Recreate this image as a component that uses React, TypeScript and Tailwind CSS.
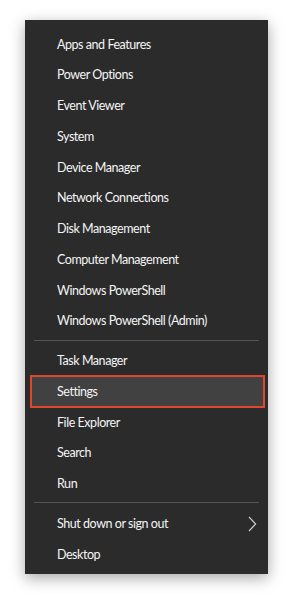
import React from "react";

const groups: string[][] = [
  [
    "Apps and Features",
    "Power Options",
    "Event Viewer",
    "System",
    "Device Manager",
    "Network Connections",
    "Disk Management",
    "Computer Management",
    "Windows PowerShell",
    "Windows PowerShell (Admin)",
  ],
  ["Task Manager", "Settings", "File Explorer", "Search", "Run"],
  ["Shut down or sign out", "Desktop"],
];

const Row: React.FC<{ label: string }> = ({ label }) => {
  const selected = label === "Settings";
  const submenu = label === "Shut down or sign out";
  return (
    <div className="relative flex h-[30.75px] items-center pl-[32px] pr-[9px]">
      {selected && (
        <div className="absolute -top-px -bottom-px left-[5px] right-[3px] border-2 border-[#e0462e] bg-[#414141]" />
      )}
      <span className="relative mt-[2px] flex-1 text-[12.5px] leading-none tracking-[-0.45px] text-[#f5f5f5]">{label}</span>
      {submenu && (
        <svg width="9" height="16" viewBox="0 0 9 16" className="relative mt-[2px] mr-[2px]">
          <path d="M1 1 L7.7 8 L1 15" fill="none" stroke="#d0d0d0" strokeWidth="1.1" />
        </svg>
      )}
    </div>
  );
};

export default function App() {
  return (
    <div className="min-h-screen bg-white pt-[20px] pl-[25px]" style={{ fontFamily: 'Lato, "Noto Sans", sans-serif' }}>
      <div className="w-[243px] bg-[#2b2b2b] pt-[8.5px] pb-[4.5px] shadow-[0_4px_14px_rgba(0,0,0,0.35)]">
        {groups.map((items, gi) => (
          <div key={gi}>
            {gi > 0 && (
              <div className="px-[9px] pt-[3.5px] pb-[4.5px]">
                <div className="h-px bg-[#555555]" />
              </div>
            )}
            {items.map((label) => (
              <Row key={label} label={label} />
            ))}
          </div>
        ))}
      </div>
    </div>
  );
}
